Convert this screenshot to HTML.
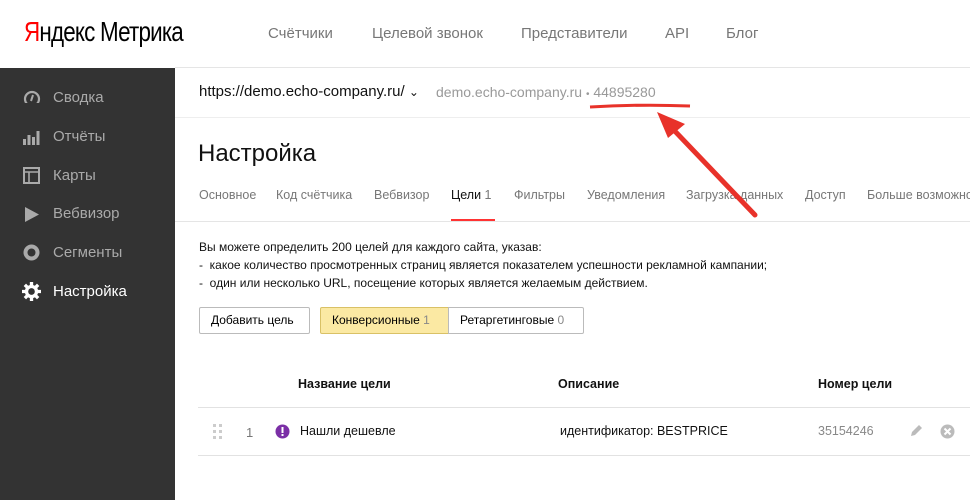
<!DOCTYPE html><html><head><meta charset="utf-8"><style>
*{margin:0;padding:0;box-sizing:border-box}
body{width:970px;height:500px;overflow:hidden;font-family:"Liberation Sans",sans-serif;background:#fff;position:relative}
.a{position:absolute;white-space:nowrap}
.side{position:absolute;left:0;top:68px;width:175px;height:432px;background:#333}
.si{position:absolute;left:53px;font-size:15px;color:#aaa}
.nav{font-size:15px;color:#777;top:25px}
.tab{top:188px;font-size:12.5px;color:#777}
.txt{font-size:12px;color:#111;left:199px}
.btn{position:absolute;top:307px;height:27px;border:1px solid #bbb;font-size:12px;line-height:25px;padding:0 11px;border-radius:2px}
.th{top:377px;font-size:12.5px;font-weight:bold;color:#111}
</style></head><body>
<div class="a" style="left:24px;top:16px;font-size:28px;letter-spacing:-1px;transform:scaleX(0.8);transform-origin:0 0"><span style="color:#f00">Я</span>ндекс Метрика</div>
<div class="a nav" style="left:268px">Счётчики</div>
<div class="a nav" style="left:372px">Целевой звонок</div>
<div class="a nav" style="left:521px">Представители</div>
<div class="a nav" style="left:665px">API</div>
<div class="a nav" style="left:726px">Блог</div>
<div class="a" style="left:175px;top:67px;width:795px;height:1px;background:#e5e5e5"></div>
<div class="side">
<svg class="a" style="left:23px;top:22px" width="18" height="16"><circle cx="9" cy="9" r="7" fill="none" stroke="#aaa" stroke-width="2.2"/><path d="M8 11 L10 5" stroke="#aaa" stroke-width="2"/><rect x="0" y="13" width="18" height="4" fill="#333"/></svg>
<div class="si" style="top:21px">Сводка</div>
<svg class="a" style="left:23px;top:61px" width="17" height="16"><rect x="0" y="10" width="3" height="6" fill="#aaa"/><rect x="4.5" y="6" width="3" height="10" fill="#aaa"/><rect x="9" y="8" width="3" height="8" fill="#aaa"/><rect x="13.5" y="2" width="3" height="14" fill="#aaa"/></svg>
<div class="si" style="top:60px">Отчёты</div>
<svg class="a" style="left:23px;top:99px" width="17" height="17"><rect x="1" y="1" width="15" height="15" fill="none" stroke="#aaa" stroke-width="2"/><path d="M1 5H16M6 5V16" stroke="#aaa" stroke-width="1.6"/></svg>
<div class="si" style="top:99px">Карты</div>
<svg class="a" style="left:24px;top:138px" width="16" height="17"><path d="M1 1L15 8.5L1 16Z" fill="#aaa"/></svg>
<div class="si" style="top:137px">Вебвизор</div>
<svg class="a" style="left:23px;top:176px" width="17" height="17"><circle cx="8.5" cy="8.5" r="6" fill="none" stroke="#aaa" stroke-width="4"/></svg>
<div class="si" style="top:176px">Сегменты</div>
<svg class="a" style="left:22px;top:214px" width="19" height="19" viewBox="0 0 20 20"><g fill="#fff"><circle cx="10" cy="10" r="7"/><g stroke="#fff" stroke-width="3.5"><path d="M10 0V20M0 10H20M3 3L17 17M17 3L3 17"/></g></g><circle cx="10" cy="10" r="3.5" fill="#333"/></svg>
<div class="si" style="top:215px;color:#fff">Настройка</div>
</div>
<div class="a" style="left:199px;top:83px;font-size:15px;color:#111">https://demo.echo-company.ru/ <span style="font-size:12px">⌄</span></div>
<div class="a" style="left:436px;top:84px;font-size:14px;color:#999">demo.echo-company.ru <span style="font-size:10px">•</span> 44895280</div>
<div class="a" style="left:175px;top:117px;width:795px;height:1px;background:#eee"></div>
<div class="a" style="left:198px;top:140px;font-size:24px;color:#111">Настройка</div>
<div class="a tab" style="left:199px">Основное</div>
<div class="a tab" style="left:276px">Код счётчика</div>
<div class="a tab" style="left:374px">Вебвизор</div>
<div class="a tab" style="left:451px;color:#111">Цели <span style="color:#777">1</span></div>
<div class="a" style="left:451px;top:219px;width:44px;height:2px;background:#f33"></div>
<div class="a tab" style="left:514px">Фильтры</div>
<div class="a tab" style="left:587px">Уведомления</div>
<div class="a tab" style="left:686px">Загрузка данных</div>
<div class="a tab" style="left:805px">Доступ</div>
<div class="a tab" style="left:867px">Больше возможнос</div>
<div class="a" style="left:175px;top:221px;width:795px;height:1px;background:#e5e5e5"></div>
<div class="a txt" style="top:240px">Вы можете определить 200 целей для каждого сайта, указав:</div>
<div class="a txt" style="top:258px">-&nbsp; какое количество просмотренных страниц является показателем успешности рекламной кампании;</div>
<div class="a txt" style="top:276px">-&nbsp; один или несколько URL, посещение которых является желаемым действием.</div>
<div class="btn" style="left:199px;width:111px">Добавить цель</div>
<div class="btn" style="left:320px;width:129px;background:#fbe9a3;border-color:#d9c166;border-radius:2px 0 0 2px">Конверсионные <span style="color:#888">1</span></div>
<div class="btn" style="left:448px;width:136px;border-radius:0 2px 2px 0">Ретаргетинговые <span style="color:#888">0</span></div>
<div class="a th" style="left:298px">Название цели</div>
<div class="a th" style="left:558px">Описание</div>
<div class="a th" style="left:818px">Номер цели</div>
<div class="a" style="left:198px;top:407px;width:772px;height:1px;background:#e2e2e2"></div>
<div class="a" style="left:198px;top:455px;width:772px;height:1px;background:#e2e2e2"></div>
<svg class="a" style="left:213px;top:424px" width="10" height="15"><g fill="#ccc"><rect x="0" y="0" width="3" height="3"/><rect x="6" y="0" width="3" height="3"/><rect x="0" y="6" width="3" height="3"/><rect x="6" y="6" width="3" height="3"/><rect x="0" y="12" width="3" height="3"/><rect x="6" y="12" width="3" height="3"/></g></svg>
<div class="a" style="left:246px;top:425px;font-size:13px;color:#777">1</div>
<svg class="a" style="left:275px;top:424px" width="15" height="15"><circle cx="7.5" cy="7.5" r="7" fill="#7b2fa6"/><rect x="6.5" y="3" width="2" height="6" fill="#fff"/><rect x="6.5" y="10" width="2" height="2" fill="#fff"/></svg>
<div class="a" style="left:300px;top:424px;font-size:12.5px;color:#111">Нашли дешевле</div>
<div class="a" style="left:560px;top:424px;font-size:12.5px;color:#111">идентификатор: BESTPRICE</div>
<div class="a" style="left:818px;top:424px;font-size:12.5px;color:#888">35154246</div>
<svg class="a" style="left:908px;top:423px" width="16" height="16"><path d="M3 13L4 9L11 2L14 5L7 12Z" fill="#bbb"/></svg>
<svg class="a" style="left:940px;top:424px" width="15" height="15"><circle cx="7.5" cy="7.5" r="7" fill="#bbb"/><path d="M4.5 4.5L10.5 10.5M10.5 4.5L4.5 10.5" stroke="#fff" stroke-width="2"/></svg>
<svg class="a" style="left:0;top:0" width="970" height="500"><path d="M590 107Q640 104 690 106" stroke="#e8322a" stroke-width="3" fill="none"/><path d="M755 215L670 126" stroke="#e8322a" stroke-width="5" stroke-linecap="round"/><path d="M657 112L685 124L668 138Z" fill="#e8322a"/></svg>
</body></html>
